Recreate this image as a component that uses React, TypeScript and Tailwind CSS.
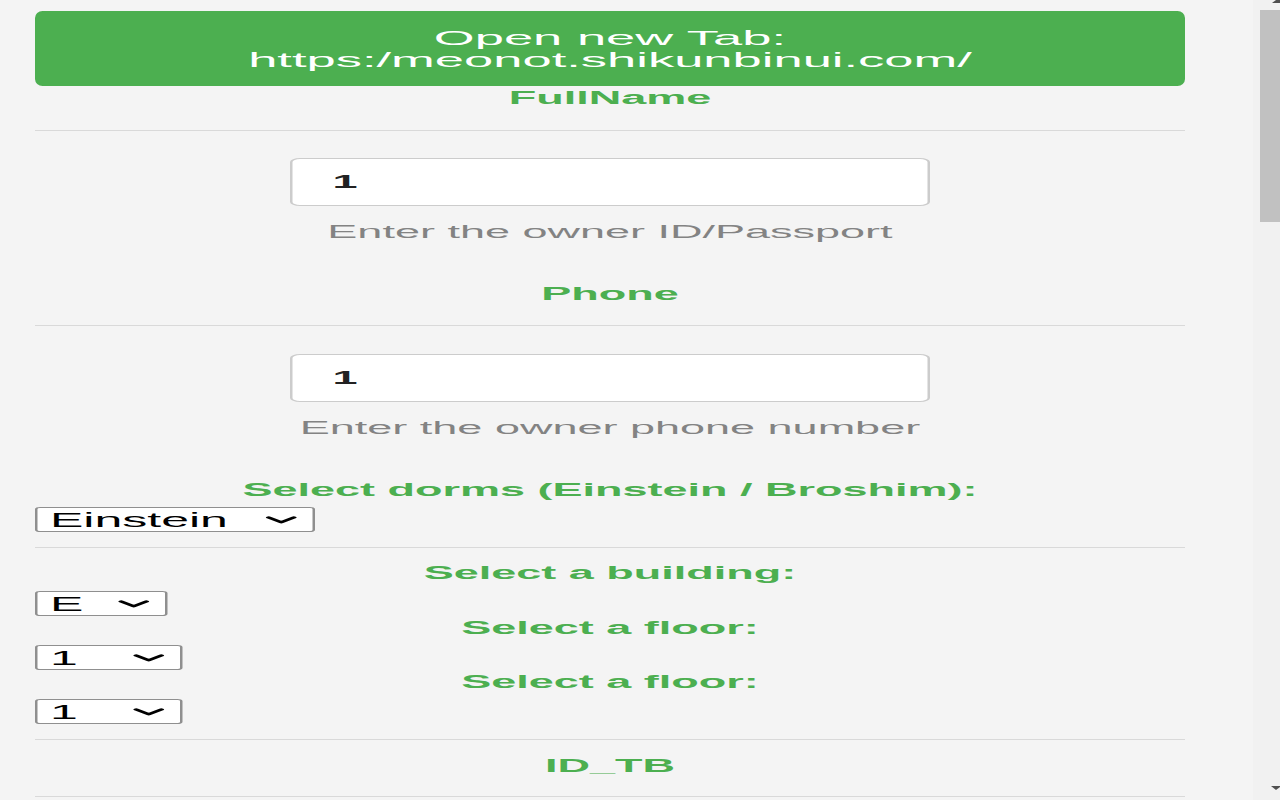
import clsx from "clsx";

// The whole form is laid out at a narrow width and stretched 2.5x horizontally,
// which is how the popup shows up in the reference.

function Divider({ className }: { className?: string }) {
  return <hr className={clsx("border-0 border-t border-[#d9d9d9]", className)} />;
}

function FieldLabel({ text, className }: { text: string; className?: string }) {
  return (
    <p
      className={clsx(
        "text-center text-[18px] font-bold leading-[22px] text-[#4caf50]",
        className,
      )}
    >
      {text}
    </p>
  );
}

function TextField({
  value,
  hint,
  className,
}: {
  value: string;
  hint: string;
  className?: string;
}) {
  return (
    <>
      <input
        readOnly
        value={value}
        className={clsx(
          "mx-auto block h-[48px] w-[256px] rounded-[4px] border border-[#cccccc] bg-white pl-4 text-[18px] font-bold text-[#222222] outline-none",
          className,
        )}
      />
      <p className="mt-[15px] text-center text-[18px] leading-[22px] text-[#838383]">
        {hint}
      </p>
    </>
  );
}

function Dropdown({
  value,
  width,
  className,
}: {
  value: string;
  width: string;
  className?: string;
}) {
  return (
    <div
      role="combobox"
      className={clsx(
        "flex h-[25px] items-center rounded-[2px] border border-[#8f8f8f] bg-white pl-[5px] pr-[6px] text-[20px] leading-none text-black",
        width,
        className,
      )}
    >
      <span>{value}</span>
      <svg
        viewBox="0 0 13 8"
        className="ml-auto h-[8px] w-[13px]"
        fill="none"
        stroke="currentColor"
        strokeWidth="2.2"
        aria-hidden="true"
      >
        <path d="M1.5 1.5 6.5 6.3 11.5 1.5" strokeLinecap="round" strokeLinejoin="round" />
      </svg>
    </div>
  );
}

function Scrollbar() {
  return (
    <div className="flex h-full w-[27px] shrink-0 flex-col bg-[#f1f1f1]">
      <svg viewBox="0 0 8 3" className="ml-auto h-[3px] w-[8px]" aria-hidden="true">
        <polygon points="0,3 8,3 8,0 4,0" fill="#505050" />
      </svg>
      <div className="ml-[7px] mt-[7px] h-[212px] w-[20px] bg-[#c1c1c1]" />
      <svg viewBox="0 0 9 4" className="mb-[10px] ml-auto mt-auto h-[4px] w-[9px]" aria-hidden="true">
        <polygon points="0,0 9,0 9,1 5,4" fill="#505050" />
      </svg>
    </div>
  );
}

export default function App() {
  return (
    <div className="flex h-[800px] w-[1280px] overflow-hidden bg-[#f4f4f4] font-['Liberation_Sans',Arial,sans-serif]">
      <div className="flex-1 overflow-hidden">
        <div className="w-[501px] origin-left scale-x-[2.5]">
          <div className="ml-[14px] w-[460px] pt-[11px]">
            <button className="flex h-[75px] w-full flex-col items-center justify-center rounded-[3px/7px] bg-[#4caf50] text-[21px] leading-[22px] text-white">
              <span>Open new Tab:</span>
              <span>https:/meonot.shikunbinui.com/</span>
            </button>

            <FieldLabel text="FullName" className="mt-[1px]" />
            <Divider className="mt-[21px]" />
            <TextField value="1" hint="Enter the owner ID/Passport" className="mt-[27px]" />

            <FieldLabel text="Phone" className="mt-[40px]" />
            <Divider className="mt-[20px]" />
            <TextField value="1" hint="Enter the owner phone number" className="mt-[28px]" />

            <FieldLabel text="Select dorms (Einstein / Broshim):" className="mt-[40px]" />
            <Dropdown value="Einstein" width="w-[112px]" className="mt-[6px]" />
            <Divider className="mt-[15px]" />

            <FieldLabel text="Select a building:" className="mt-[14px]" />
            <Dropdown value="E" width="w-[53px]" className="mt-[7px]" />
            <FieldLabel text="Select a floor:" className="mt-[1px]" />
            <Dropdown value="1" width="w-[59px]" className="mt-[6px]" />
            <FieldLabel text="Select a floor:" className="mt-[1px]" />
            <Dropdown value="1" width="w-[59px]" className="mt-[6px]" />
            <Divider className="mt-[15px]" />

            <FieldLabel text="ID_TB" className="mt-[15px]" />
            <Divider className="mt-[19px]" />
          </div>
        </div>
      </div>
      <Scrollbar />
    </div>
  );
}
